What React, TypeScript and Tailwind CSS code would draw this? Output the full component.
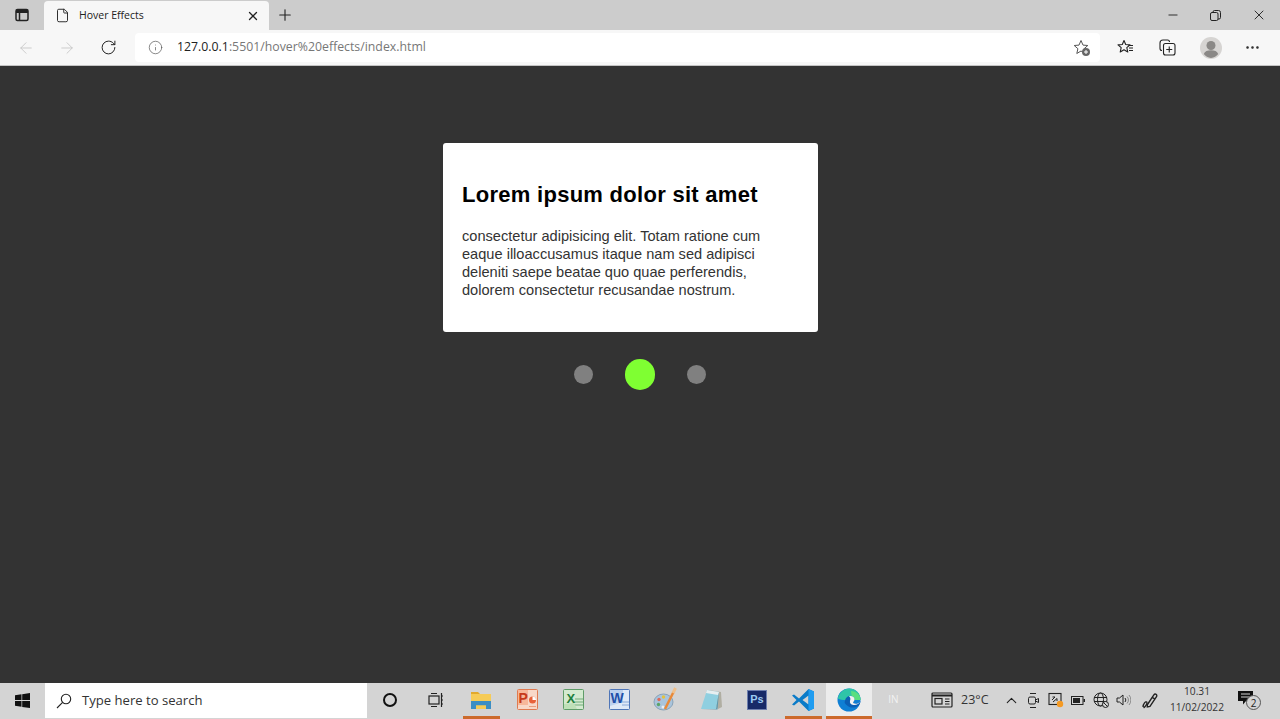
import type { ReactNode } from 'react';
import { ArrowLeft, ArrowRight, ChevronUp, Ellipsis, File, Info, Minus, Plus, RotateCw, X } from 'lucide-react';

function TabsIcon() {
  return (
    <svg width="14" height="14" viewBox="0 0 14 14" fill="none" stroke="#222" strokeWidth="1.5">
      <rect x="1" y="1.500" width="12" height="11" rx="1.500" />
      <path d="M1 3.500h12" strokeWidth="3" />
      <path d="M4.500 3v9" />
    </svg>
  );
}

function RestoreIcon() {
  return (
    <svg width="11" height="11" viewBox="0 0 11 11" fill="none" stroke="#222" strokeWidth="1">
      <rect x="0.500" y="2.500" width="7.500" height="8" rx="1.500" />
      <path d="M3 2.500V2a1.500 1.500 0 0 1 1.500-1.500h4A2 2 0 0 1 10.500 2.500v5A1.500 1.500 0 0 1 9 9h-1" />
    </svg>
  );
}

function StarPlusIcon() {
  return (
    <svg width="18" height="18" viewBox="0 0 18 18" fill="none">
      <path d="M8 1.500l2 4.600 4.800.4-3.700 3.200 1.100 4.800L8 12l-4.200 2.500 1.100-4.800L1.200 6.500 6 6.100z" stroke="#555" strokeWidth="1" strokeLinejoin="round" />
      <circle cx="13" cy="13" r="4" fill="#666" />
      <path d="M13 11v4M11 13h4" stroke="#fff" strokeWidth="1" />
    </svg>
  );
}

function FavoritesIcon() {
  return (
    <svg width="17" height="17" viewBox="0 0 17 17" fill="none" stroke="#222" strokeWidth="1.100">
      <path d="M7 1.500l1.700 4 4.300.4-3.200 2.800 1 4.300L7 10.700l-3.800 2.300 1-4.300L1 5.900l4.300-.4z" strokeLinejoin="round" />
      <path d="M11.500 6.500h4.500M12 9h4M12 11.500h4" />
    </svg>
  );
}

function CollectionsIcon() {
  return (
    <svg width="17" height="17" viewBox="0 0 17 17" fill="none" stroke="#222" strokeWidth="1.100">
      <path d="M3 11.500a2 2 0 0 1-2-2V4a3 3 0 0 1 3-3h4.500a2 2 0 0 1 2 2" />
      <rect x="4.500" y="4.500" width="11.500" height="11.500" rx="2" />
      <path d="M10.250 7.500v6M7.250 10.500h6" />
    </svg>
  );
}

function AvatarIcon() {
  return (
    <svg width="22" height="22" viewBox="0 0 22 22">
      <circle cx="11" cy="11" r="11" fill="#d6d4d2" />
      <circle cx="11" cy="8.500" r="4.500" fill="#8a8886" />
      <path d="M3.800 17c1-2.700 3.600-3.700 7.200-3.700s6.200 1 7.200 3.700A10 10 0 0 1 11 21a10 10 0 0 1-7.200-4z" fill="#8a8886" />
    </svg>
  );
}

function WindowsLogo() {
  return (
    <svg width="15" height="15" viewBox="0 0 15 15" fill="#111">
      <path d="M0 2.200l6.500-.9v5.800H0zM7.200 1.200L15 0v7.100H7.200zM0 7.900h6.500v5.800L0 12.800zM7.200 7.900H15V15l-7.800-1.100z" />
    </svg>
  );
}

function SearchGlass() {
  return (
    <svg width="16" height="16" viewBox="0 0 16 16" fill="none" stroke="#222" strokeWidth="1.100">
      <circle cx="10" cy="6" r="4.700" />
      <path d="M6.600 9.400L1 15" />
    </svg>
  );
}

function TaskViewIcon() {
  return (
    <svg width="16" height="16" viewBox="0 0 16 16" fill="none" stroke="#222" strokeWidth="1.200">
      <rect x="1" y="4" width="10" height="8" />
      <path d="M3 1.500h6M3 14.500h6M13.500 1v14" />
      <path d="M13 4h2M13 8h2M13 12h2" />
    </svg>
  );
}

function FolderIcon() {
  return (
    <svg width="22" height="20" viewBox="0 0 22 20">
      <path d="M1 2h7l2 2H1z" fill="#e2a92c" />
      <rect x="1" y="4" width="20" height="15" fill="#f6cb57" />
      <path d="M1 11h20v8h-5v-3.500H6V19H1z" fill="#3c8ec4" />
      <rect x="6" y="15.500" width="10" height="3.500" fill="#f6cb57" />
    </svg>
  );
}

function PowerPointIcon() {
  return (
    <svg width="21" height="21" viewBox="0 0 21 21">
      <rect x="0.500" y="0.500" width="20" height="20" rx="1" fill="#f8d8c8" stroke="#e07a50" />
      <rect x="1" y="1" width="10" height="15" fill="#f7b79a" />
      <circle cx="15.500" cy="11" r="3.500" fill="#e8623a" />
      <path d="M15.500 11V7.500a3.500 3.500 0 0 1 3.500 3.500z" fill="#fff" />
      <path d="M12 17.500h7" stroke="#e8a080" />
      <text x="1.500" y="14" fontSize="14" fontWeight="700" fill="#c7391a" fontFamily="Liberation Sans, sans-serif">P</text>
    </svg>
  );
}

function ExcelIcon() {
  return (
    <svg width="21" height="21" viewBox="0 0 21 21">
      <rect x="0.500" y="0.500" width="20" height="20" rx="1" fill="#d4ead0" stroke="#5f9c68" />
      <path d="M12 10h8M11 13h9M11 16h9" stroke="#73ad7a" strokeWidth="1" />
      <path d="M1 15l10-1 3 6H1z" fill="#bfe0b8" />
      <text x="3.500" y="14" fontSize="13" fontWeight="700" fill="#22803c" fontFamily="Liberation Sans, sans-serif">X</text>
    </svg>
  );
}

function WordIcon() {
  return (
    <svg width="21" height="21" viewBox="0 0 21 21">
      <rect x="0.500" y="0.500" width="20" height="20" rx="1" fill="#dfe9f7" stroke="#4f76b8" />
      <path d="M1 1h13v12L1 17z" fill="#bcd1ee" />
      <path d="M13 13h7M13 16h7" stroke="#8aa8d8" strokeWidth="1" />
      <text x="1.500" y="14" fontSize="14" fontWeight="700" fill="#1f4fa8" fontFamily="Liberation Sans, sans-serif">W</text>
    </svg>
  );
}

function PaintIcon() {
  return (
    <svg width="25" height="25" viewBox="0 0 25 25">
      <ellipse cx="10.500" cy="15" rx="9.500" ry="8" fill="#a9c4dc" stroke="#8aa3b8" />
      <circle cx="6" cy="12.500" r="1.700" fill="#e06a5a" />
      <circle cx="10.500" cy="10" r="1.700" fill="#e6c23c" />
      <circle cx="5.500" cy="17.500" r="1.700" fill="#5aa469" />
      <circle cx="10" cy="20" r="1.500" fill="#e8eef4" />
      <path d="M12 22L20.500 5" stroke="#e88a3a" strokeWidth="2.500" />
      <path d="M20 6l2.500-5" stroke="#f0c08a" strokeWidth="3" />
    </svg>
  );
}

function NotepadIcon() {
  return (
    <svg width="23" height="23" viewBox="0 0 23 23">
      <path d="M8 2l13 2 1 15-4 2z" fill="#b0aea2" />
      <path d="M7 2l12 2-3 17H1z" fill="#8fcfe0" />
      <path d="M7 2l12 2-1 3L6 5z" fill="#e6eef0" />
      <path d="M1 21h15l3-17-1.500 17.500z" fill="#5f99ae" />
    </svg>
  );
}

function PhotoshopIcon() {
  return (
    <div className="flex h-[20px] w-[20px] items-center justify-center border border-[#6e7fae] bg-[#172a68] font-['Liberation_Sans',sans-serif] text-[11px] font-bold text-[#9ccbf2]">
      Ps
    </div>
  );
}

function VSCodeIcon() {
  return (
    <svg width="24" height="24" viewBox="0 0 24 24">
      <path d="M17.500 1L23 3.500v17L17.500 23 8 13.600l-5 3.900L1 16.400 5.500 12 1 7.600l2-1.100 5 3.900z" fill="#0a7bc8" />
      <path d="M17.500 7.500L11.500 12l6 4.500z" fill="#d4d4d4" />
      <path d="M17.500 1L23 3.500v17L17.500 23z" fill="#1f9cf0" />
    </svg>
  );
}

function EdgeIcon() {
  return (
    <svg width="24" height="24" viewBox="0 0 24 24">
      <circle cx="12" cy="12" r="11.500" fill="#0f7fd4" />
      <path d="M.8 10.500C2 4.500 7 .5 12.500.5c6 0 11 4.500 11 11.500H9C5.500 12 3 11.500.8 10.500z" fill="#2fc4a8" />
      <path d="M14 3c5 0 9.500 3.500 9.500 9h-8c0-3-1.500-6-1.500-9z" fill="#5adf7e" />
      <path d="M8 13.500c0-3.500 2.500-5.500 5.500-5.500 2.500 0 4 1.700 4 3.500 0 1-.5 1.700-1 2.200-.5.500-.6 1 .2 1.600 1.800 1 5 .5 6.800-2.300-.3 2-1 3.500-2 4.700-3 2-7 2.500-9.500 1-2.800-1.500-4.500-3-4.500-5.200z" fill="#0b5fb4" />
      <path d="M12 8.300c3-1 5.700.8 5.500 3.200 0 1-.5 1.700-1 2.200-.5.500-.6 1 .2 1.600 1.800 1 5 .5 6.300-1.800-.6 2.200-3.500 3.800-6.500 3.500-3-.3-4-2.200-3.500-4 .4-1.500 1-2.800-1-4.700z" fill="#f2f2f2" />
    </svg>
  );
}

function NewsIcon() {
  return (
    <svg width="22" height="16" viewBox="0 0 22 16" fill="none" stroke="#222" strokeWidth="1.200">
      <rect x="1" y="1" width="20" height="14" rx="1" />
      <path d="M1 3.500h20" strokeWidth="2" />
      <rect x="4" y="6.500" width="7" height="5.500" />
      <path d="M14 7h4.500M14 9.500h4.500M14 12h4.500" />
    </svg>
  );
}

function MeetIcon() {
  return (
    <svg width="13" height="17" viewBox="0 0 13 17" fill="none" stroke="#222" strokeWidth="1">
      <path d="M3 1.500h6M3 15.500h6" />
      <rect x="1.500" y="5" width="7" height="7" rx="1.500" />
      <path d="M8.500 8l3-1.500v4l-3-1.500" />
    </svg>
  );
}

function UpdateIcon() {
  return (
    <svg width="16" height="16" viewBox="0 0 16 16" fill="none">
      <rect x="1" y="1.500" width="12" height="11" stroke="#222" strokeWidth="1.100" />
      <path d="M4 8l3-3M7 5H4.500M5 10l4-3.500M9 6.500V9" stroke="#222" strokeWidth="1" />
      <circle cx="12" cy="12" r="3.200" fill="#f59a23" />
    </svg>
  );
}

function BatteryIcon() {
  return (
    <svg width="14" height="9" viewBox="0 0 14 9">
      <rect x="0.500" y="0.500" width="11.500" height="8" fill="none" stroke="#222" />
      <rect x="2" y="2" width="7" height="5" fill="#222" />
      <rect x="12.500" y="3" width="1.500" height="3" fill="#222" />
    </svg>
  );
}

function GlobeIcon() {
  return (
    <svg width="16" height="16" viewBox="0 0 16 16" fill="none" stroke="#222" strokeWidth="1">
      <circle cx="7.500" cy="7.500" r="6.500" />
      <ellipse cx="7.500" cy="7.500" rx="3" ry="6.500" />
      <path d="M1 5.500h13M1 9.500h13" />
      <circle cx="12.500" cy="12.500" r="3" fill="#d4d4d4" />
      <path d="M10.500 10.500l4 4" />
    </svg>
  );
}

function SpeakerIcon() {
  return (
    <svg width="15" height="14" viewBox="0 0 15 14" fill="none" stroke="#222" strokeWidth="1">
      <path d="M1 5h2.500L7 2v10L3.500 9H1z" />
      <path d="M9 5a3 3 0 0 1 0 4" />
      <path d="M11 3.500a5 5 0 0 1 0 7M13 2a7.500 7.500 0 0 1 0 10" stroke="#888" />
    </svg>
  );
}

function PenIcon() {
  return (
    <svg width="17" height="17" viewBox="0 0 16 16" fill="none" stroke="#222" strokeWidth="1.300">
      <path d="M5 12l6-9c.6-.9 1.500-1.300 2.300-.8.800.5.800 1.500.2 2.400L7.500 13.500 5 14z" />
      <path d="M9.500 5l2.500 1.500" />
      <path d="M1 14c0-3 2.500-5.500 3.500-4.500S3 14 1.500 15" />
    </svg>
  );
}

function NotificationIcon() {
  return (
    <div className="relative h-[20px] w-[24px]">
      <svg width="16" height="16" viewBox="0 0 16 16" fill="#111">
        <path d="M0 1h15v10H8l-3 3.500V11H0z" />
        <path d="M3 4h9M3 7h9" stroke="#d4d4d4" strokeWidth="1" />
      </svg>
      <div className="absolute left-[8px] top-[5px] flex h-[15px] w-[15px] items-center justify-center rounded-full border border-[#555] bg-[#d4d4d4] text-[10px] leading-none text-[#222]">
        2
      </div>
    </div>
  );
}

function TaskButton({ children, underline, active, width = 'w-[46px]' }: { children: ReactNode; underline?: boolean; active?: boolean; width?: string }) {
  return (
    <div className={`flex h-full flex-col items-center ${width} ${active ? 'bg-[#ececec]' : ''}`}>
      <div className="flex flex-1 items-center justify-center">{children}</div>
      <div className={`h-[3px] ${active ? 'w-full' : 'w-[37px]'} ${underline ? 'bg-[#cc6a2c]' : ''}`} />
    </div>
  );
}

function TrayItem({ children, width }: { children: ReactNode; width: string }) {
  return <div className={`flex h-full items-center justify-center pb-[2px] ${width}`}>{children}</div>;
}

function BrowserChrome() {
  return (
    <header className="shrink-0 font-['Open_Sans',sans-serif]">
      <div className="flex h-[30px] items-end bg-[#cccccc]">
        <div className="flex h-full w-[44px] items-center justify-center">
          <TabsIcon />
        </div>
        <div className="flex h-[29px] w-[225px] items-center rounded-t-[4px] bg-[#f7f7f7] pl-[11px] pr-[9px]">
          <File size={15} strokeWidth={1.500} className="text-[#222]" />
          <span className="ml-[9px] flex-1 text-[10.5px] text-[#222]">Hover Effects</span>
          <X size={14} strokeWidth={2.200} className="text-[#222]" />
        </div>
        <div className="flex h-full w-[32px] items-center justify-center">
          <Plus size={18} strokeWidth={1.500} className="text-[#222]" />
        </div>
        <div className="flex-1" />
        <div className="flex h-full items-center">
          <div className="flex h-full w-[43px] items-center justify-center">
            <Minus size={14} strokeWidth={1.600} className="text-[#222]" />
          </div>
          <div className="flex h-full w-[43px] items-center justify-center">
            <RestoreIcon />
          </div>
          <div className="flex h-full w-[43px] items-center justify-center">
            <X size={16} strokeWidth={1.400} className="text-[#222]" />
          </div>
        </div>
      </div>
      <div className="flex h-[36px] items-center border-b border-[#c4c4c4] bg-[#f7f7f7]">
        <div className="flex w-[135px] items-center pl-[17px]">
          <ArrowLeft size={18} strokeWidth={1.100} className="text-[#c4c4c4]" />
          <ArrowRight size={18} strokeWidth={1.100} className="ml-[23px] text-[#c4c4c4]" />
          <RotateCw size={17} strokeWidth={1.400} className="ml-[24px] text-[#222]" />
        </div>
        <div className="flex h-[29px] w-[965px] items-center rounded-[4px] bg-white pl-[13px] pr-[9px]">
          <Info size={15} strokeWidth={1.100} className="text-[#555]" />
          <span className="ml-[14px] flex-1 text-[12.300px] text-[#777]">
            <span className="text-[#222]">127.0.0.1</span>:5501/hover%20effects/index.html
          </span>
          <StarPlusIcon />
        </div>
        <div className="flex flex-1 items-center pl-[17px]">
          <FavoritesIcon />
          <div className="ml-[25px]">
            <CollectionsIcon />
          </div>
          <div className="ml-[24px]">
            <AvatarIcon />
          </div>
          <Ellipsis size={17} strokeWidth={1.600} className="ml-[22px] text-[#222]" />
        </div>
      </div>
    </header>
  );
}

function Taskbar() {
  return (
    <footer className="flex h-[36px] shrink-0 items-stretch bg-[#d4d4d4] font-['Open_Sans',sans-serif] text-[#222]">
      <div className="flex w-[45px] items-center justify-center pb-[1px]">
        <WindowsLogo />
      </div>
      <div className="mb-[1px] flex w-[322px] items-center bg-white pl-[11px]">
        <SearchGlass />
        <span className="ml-[10px] text-[13.100px] text-[#333]">Type here to search</span>
      </div>
      <TaskButton>
        <div className="h-[14px] w-[14px] rounded-full border-[2.500px] border-[#111]" />
      </TaskButton>
      <TaskButton width="w-[45px]">
        <TaskViewIcon />
      </TaskButton>
      <TaskButton underline>
        <FolderIcon />
      </TaskButton>
      <TaskButton>
        <PowerPointIcon />
      </TaskButton>
      <TaskButton>
        <ExcelIcon />
      </TaskButton>
      <TaskButton>
        <WordIcon />
      </TaskButton>
      <TaskButton>
        <PaintIcon />
      </TaskButton>
      <TaskButton>
        <NotepadIcon />
      </TaskButton>
      <TaskButton>
        <PhotoshopIcon />
      </TaskButton>
      <TaskButton underline>
        <VSCodeIcon />
      </TaskButton>
      <TaskButton underline active>
        <EdgeIcon />
      </TaskButton>
      <div className="flex w-[43px] items-center justify-center pb-[4px] text-[10px] text-[#f2f2f2]">IN</div>
      <div className="flex flex-1 items-center">
        <div className="flex h-full w-[46px] items-center pb-[2px] pl-[16px]">
          <NewsIcon />
        </div>
        <span className="w-[39px] pb-[2px] text-[12.500px] text-[#333]">23°C</span>
        <TrayItem width="w-[22px]">
          <ChevronUp size={17} strokeWidth={1.500} />
        </TrayItem>
        <TrayItem width="w-[23px]">
          <MeetIcon />
        </TrayItem>
        <TrayItem width="w-[22px]">
          <UpdateIcon />
        </TrayItem>
        <TrayItem width="w-[22px]">
          <BatteryIcon />
        </TrayItem>
        <TrayItem width="w-[23px]">
          <GlobeIcon />
        </TrayItem>
        <TrayItem width="w-[22px]">
          <SpeakerIcon />
        </TrayItem>
        <TrayItem width="w-[32px]">
          <PenIcon />
        </TrayItem>
        <div className="flex w-[62px] flex-col items-center self-start text-[10.200px] leading-[16px] text-[#333]">
          <span>10.31</span>
          <span>11/02/2022</span>
        </div>
        <TrayItem width="w-[44px]">
          <NotificationIcon />
        </TrayItem>
      </div>
    </footer>
  );
}

export default function App() {
  return (
    <div className="flex h-[719px] w-[1280px] flex-col overflow-hidden">
      <BrowserChrome />
      <main className="flex flex-1 flex-col items-center bg-[#333333] pt-[77px] font-['Liberation_Sans',sans-serif]">
        <section className="mr-[19px] h-[189px] w-[375px] rounded-[3px] bg-white px-[19px] pt-[38px]">
          <h2 className="text-[22px] font-bold leading-[28px] tracking-[0.280px] text-black">Lorem ipsum dolor sit amet</h2>
          <p className="mt-[18px] w-[320px] text-[14.600px] leading-[18px] text-[#333]">
            consectetur adipisicing elit. Totam ratione cum eaque illoaccusamus itaque nam sed adipisci deleniti saepe beatae quo quae perferendis, dolorem consectetur recusandae nostrum.
          </p>
        </section>
        <div className="mt-[27px] flex h-[31px] items-center gap-[32px]">
          <div className="h-[19px] w-[19px] rounded-full bg-[#808080]" />
          <div className="h-[31px] w-[30px] rounded-full bg-[#7fff32]" />
          <div className="h-[19px] w-[19px] rounded-full bg-[#808080]" />
        </div>
      </main>
      <Taskbar />
    </div>
  );
}
